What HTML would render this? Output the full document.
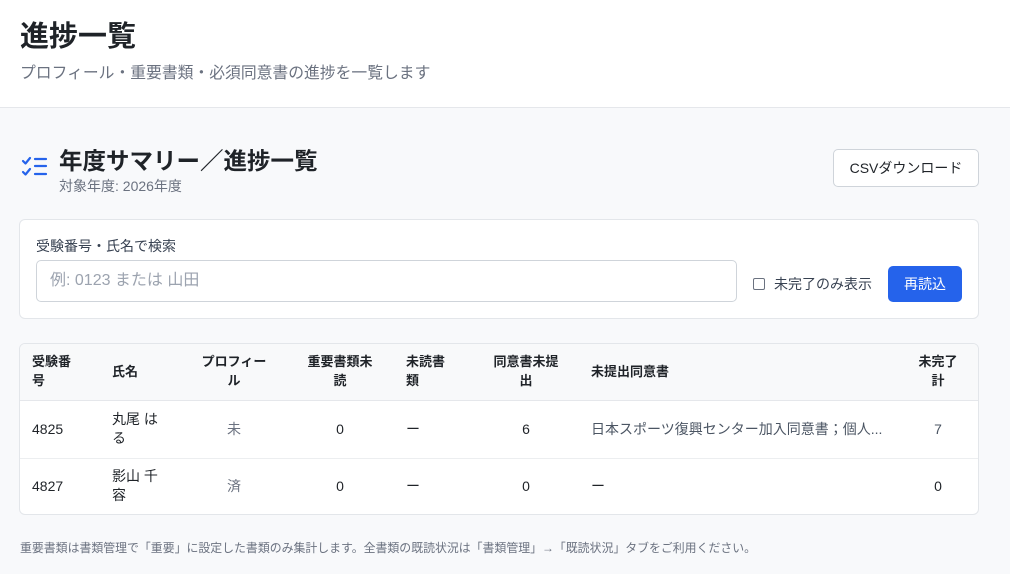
<!DOCTYPE html>
<html><head><meta charset="utf-8"><style>
*{margin:0;padding:0;box-sizing:border-box}
body{width:1010px;height:574px;background:#f8f9fb;font-family:"Liberation Sans","Noto Sans CJK JP",sans-serif;color:#1f2328;position:relative;overflow:hidden}
.a{position:absolute;white-space:nowrap}
.top{position:absolute;left:0;top:0;width:1010px;height:108px;background:#fff;border-bottom:1px solid #e5e7eb}
.card{position:absolute;background:#fff;border:1px solid #e3e6ea;border-radius:6px}
.th{font-size:13px;font-weight:bold;line-height:19px;color:#1f2328}
.td{font-size:14px;line-height:19px}
.c{text-align:center;transform:translateX(-50%)}
</style></head><body>
<div class="top">
<div class="a" style="left:20px;top:13px;font-size:29px;font-weight:bold">進捗一覧</div>
<div class="a" style="left:20px;top:60px;font-size:15.8px;color:#6b7280">プロフィール・重要書類・必須同意書の進捗を一覧します</div>
</div>
<svg class="a" style="left:20px;top:155px" width="30" height="26" viewBox="0 0 30 26" fill="none" stroke="#2563eb" stroke-width="2.2" stroke-linecap="round" stroke-linejoin="round">
<path d="M3 6l2.5 2.5L10 3"/><path d="M3 17l2.5 2.5L10 14"/><path d="M15 4h11M15 11h11M15 19h11"/></svg>
<div class="a" style="left:59px;top:142px;font-size:23.5px;font-weight:bold">年度サマリー／進捗一覧</div>
<div class="a" style="left:59px;top:176px;font-size:14px;color:#6b7280">対象年度: 2026年度</div>
<div class="a" style="left:833px;top:149px;width:146px;height:38px;border:1px solid #cfd4da;border-radius:5px;background:#fff;font-size:14px;text-align:center;line-height:36px">CSVダウンロード</div>
<div class="card" style="left:19px;top:219px;width:960px;height:100px"></div>
<div class="a" style="left:36px;top:236px;font-size:14px;color:#374151">受験番号・氏名で検索</div>
<div class="a" style="left:36px;top:260px;width:701px;height:42px;border:1px solid #cfd4da;border-radius:5px;background:#fff;font-size:16px;color:#9ca3af;padding-left:13px;line-height:40px">例: 0123 または 山田</div>
<div class="a" style="left:753px;top:278px;width:12px;height:12px;border:1px solid #6b7280;border-radius:2px;background:#fff"></div>
<div class="a" style="left:774px;top:274px;font-size:14px;color:#374151">未完了のみ表示</div>
<div class="a" style="left:888px;top:266px;width:74px;height:36px;background:#2563eb;border-radius:5px;color:#fff;font-size:14px;text-align:center;line-height:36px">再読込</div>
<div class="card" style="left:19px;top:343px;width:960px;height:172px;overflow:hidden">
<div style="position:absolute;left:0;top:0;width:960px;height:57px;background:#f8f9fa;border-bottom:1px solid #e5e7eb"></div>
<div style="position:absolute;left:0;top:114px;width:960px;height:1px;background:#eceef0"></div>
</div>
<div class="a th" style="left:32px;top:352px">受験番<br>号</div>
<div class="a th" style="left:112px;top:362px">氏名</div>
<div class="a th c" style="left:234px;top:352px">プロフィー<br>ル</div>
<div class="a th c" style="left:340px;top:352px">重要書類未<br>読</div>
<div class="a th" style="left:406px;top:352px">未読書<br>類</div>
<div class="a th c" style="left:526px;top:352px">同意書未提<br>出</div>
<div class="a th" style="left:591px;top:362px">未提出同意書</div>
<div class="a th c" style="left:938px;top:352px">未完了<br>計</div>
<div class="a td" style="left:32px;top:420px">4825</div>
<div class="a td" style="left:112px;top:410px">丸尾 は<br>る</div>
<div class="a td c" style="left:234px;top:420px;color:#6b7280">未</div>
<div class="a td c" style="left:340px;top:420px">0</div>
<div class="a td" style="left:406px;top:420px">ー</div>
<div class="a td c" style="left:526px;top:420px">6</div>
<div class="a td" style="left:591px;top:420px;color:#4b5563">日本スポーツ復興センター加入同意書；個人...</div>
<div class="a td c" style="left:938px;top:420px;color:#4b5563">7</div>
<div class="a td" style="left:32px;top:477px">4827</div>
<div class="a td" style="left:112px;top:467px">影山 千<br>容</div>
<div class="a td c" style="left:234px;top:477px;color:#6b7280">済</div>
<div class="a td c" style="left:340px;top:477px">0</div>
<div class="a td" style="left:406px;top:477px">ー</div>
<div class="a td c" style="left:526px;top:477px">0</div>
<div class="a td" style="left:591px;top:477px">ー</div>
<div class="a td c" style="left:938px;top:477px">0</div>
<div class="a" style="left:20px;top:539px;font-size:11.9px;color:#6b7280">重要書類は書類管理で「重要」に設定した書類のみ集計します。全書類の既読状況は「書類管理」→「既読状況」タブをご利用ください。</div>
</body></html>
